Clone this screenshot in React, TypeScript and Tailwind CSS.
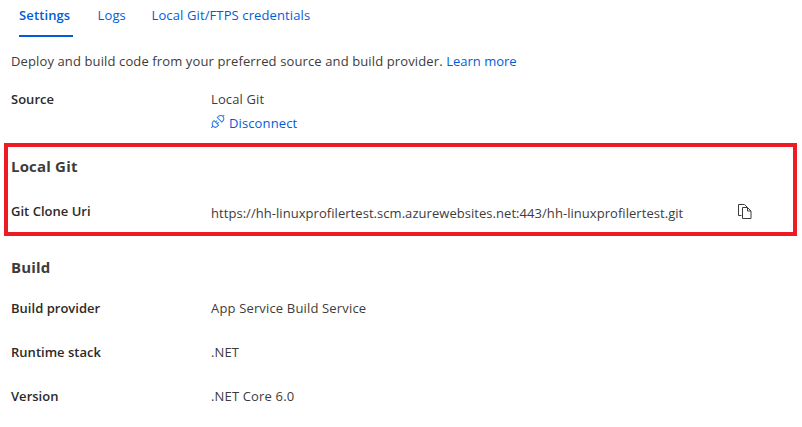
import type { ReactNode } from "react";

function Row({ label, top, children }: { label: string; top: string; children: ReactNode }) {
  return (
    <div className={`flex h-5 items-center whitespace-nowrap ${top}`}>
      <div className="w-[200px] font-semibold tracking-[0.02px] text-[#2b2a29]">{label}</div>
      {children}
    </div>
  );
}

export default function App() {
  return (
    <main className="h-[427px] w-[802px] overflow-hidden bg-white font-['Open_Sans','Noto_Sans',sans-serif] text-[13px] leading-5 tracking-[0.12px] text-[#3d3c3b]">
      <nav className="flex h-[37px] pl-[19px] pt-[5px] text-[#015cda]">
        <div className="h-8 w-[54px] border-b-2 border-[#015cda] font-semibold">Settings</div>
        <div className="ml-[24.6px] w-[53.9px]">Logs</div>
        <div>Local Git/FTPS credentials</div>
      </nav>
      <p className="mt-[14px] pl-[11px] whitespace-nowrap">
        Deploy and build code from your preferred source and build provider. <a className="tracking-normal text-[#015cda]">Learn more</a>
      </p>
      <div className="pl-[11px]">
        <Row label="Source" top="mt-[18px]">Local Git</Row>
        <div className="mt-1 ml-[200px] flex h-5 items-center text-[#015cda]">
          <svg className="mr-[3px] -mt-1" width="15" height="15" viewBox="0.7 0.2 15 15" fill="none" stroke="#2f78e4" strokeWidth="1.05">
            <path d="M1 14l1.6-1.6M3.8 6.9l4.5 4.5-1 1a3.1 3.1 0 0 1-4.5-4.5zM7 3.7l1.1-1.1a3.1 3.1 0 0 1 4.5 4.5l-1.1 1.1zM12.6 2.6l1.4-1.4M5.4 8.2l1.5-1.5M6.9 9.8l1.5-1.5" />
          </svg>
          Disconnect
        </div>
      </div>
      <section className="mt-[10px] ml-1 h-[93px] w-[793px] border-4 border-[#ed1c24] pl-[3px]">
        <h2 className="mt-[9px] text-[15px] font-bold leading-5 tracking-[0.18px]">Local Git</h2>
        <Row label="Git Clone Uri" top="mt-[25px]">
          <span className="w-[527px] pt-[3px] tracking-[0.05px]">https://hh-linuxprofilertest.scm.azurewebsites.net:443/hh-linuxprofilertest.git</span>
          <svg width="14" height="15" viewBox="0 0 14 15" fill="none" stroke="currentColor">
            <path d="M3.5 11.5h-3V.5h6l3 3M4.5 3.5h5l3.5 3.5v7.5H4.5zM9.5 3.5v3.5h3.5" />
          </svg>
        </Row>
      </section>
      <section className="pl-[11px]">
        <h2 className="mt-[21px] text-[15px] font-bold leading-5 tracking-[0.18px]">Build</h2>
        <Row label="Build provider" top="mt-[21px]">
          <span className="tracking-[0.16px]">App Service Build Service</span>
        </Row>
        <Row label="Runtime stack" top="mt-6">.NET</Row>
        <Row label="Version" top="mt-6">
          <span className="tracking-[0.16px]">.NET Core 6.0</span>
        </Row>
      </section>
    </main>
  );
}
